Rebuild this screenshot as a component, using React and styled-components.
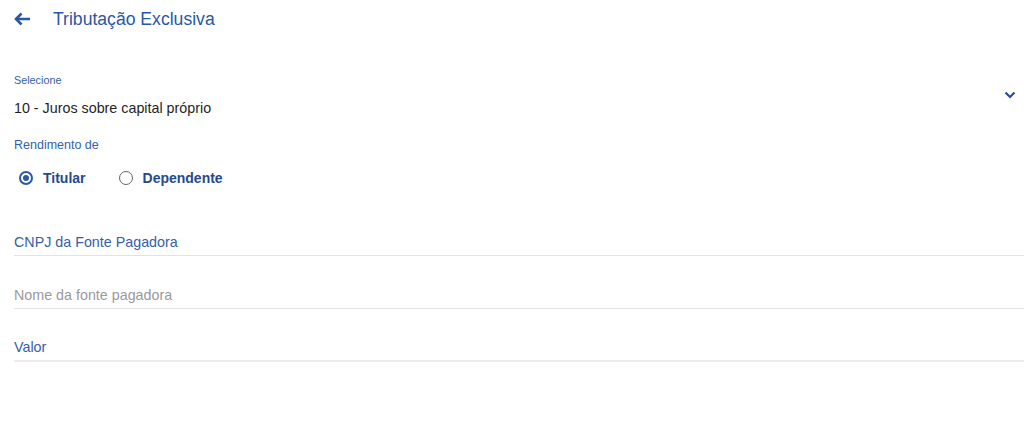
import React, { useState } from 'react';
import styled, { createGlobalStyle } from 'styled-components';

const GlobalStyle = createGlobalStyle`
    body {
        margin: 0;
        background: #ffffff;
        font-family: "Liberation Sans", Arial, sans-serif;
    }
`

const Page = styled.div`
    display: flex;
    flex-direction: column;
    padding-left: 14px;
`

const Header = styled.div`
    display: flex;
    align-items: center;
    height: 38px;
    gap: 22px;

    h1 {
        margin: 0;
        font-size: 17.6px;
        font-weight: 400;
        color: #2a58a6;
    }
`

const BackButton = styled.button`
    display: flex;
    align-items: center;
    border: none;
    background: none;
    padding: 0;
    cursor: pointer;
`

const SelectField = styled.div`
    display: flex;
    align-items: center;
    justify-content: space-between;
    margin-top: 35px;
    padding-right: 8px;
`

const SelectText = styled.div`
    display: flex;
    flex-direction: column;
`

const SmallLabel = styled.span`
    font-size: 10.8px;
    line-height: 14px;
    color: #3560a8;
`

const SelectValue = styled.span`
    margin-top: 13px;
    font-size: 14.3px;
    line-height: 16px;
    color: #1f1f1f;
`

const SectionLabel = styled.span`
    margin-top: 21px;
    font-size: 12.5px;
    line-height: 16px;
    color: #3560a8;
`

const RadioRow = styled.div`
    display: flex;
    align-items: center;
    gap: 33px;
    margin-top: 17px;
    padding-left: 5px;
`

const RadioOption = styled.label`
    display: flex;
    align-items: center;
    gap: 10px;
    font-size: 14px;
    font-weight: 700;
    color: #26498c;
    cursor: pointer;
`

const RadioCircle = styled.span`
    box-sizing: border-box;
    width: 14px;
    height: 14px;
    border-radius: 50%;
    border: ${props => props.checked ? '2px solid #2a58a6' : '1.5px solid #666666'};
    display: flex;
    align-items: center;
    justify-content: center;

    &::after {
        content: '';
        width: 6px;
        height: 6px;
        border-radius: 50%;
        background: ${props => props.checked ? '#2a58a6' : 'transparent'};
    }
`

const Fields = styled.div`
    display: flex;
    flex-direction: column;
    margin-top: 19px;
`

const InputField = styled.div`
    display: flex;
    align-items: flex-end;
    height: ${props => props.first ? '51px' : '53px'};
    box-sizing: border-box;
    padding-bottom: 5px;
    border-bottom: ${props => props.thick ? '2px solid #ececec' : '1px solid #e2e2e2'};

    span {
        font-size: 14.3px;
        line-height: 16px;
        color: ${props => props.muted ? '#9a9a9a' : '#3560a8'};
    }
`

function App() {
    const [owner, setOwner] = useState('titular')

    return (
        <Page>
            <GlobalStyle />
            <Header>
                <BackButton aria-label='Voltar'>
                    <svg width='17' height='14' viewBox='0 0 17 14'>
                        <path d='M16 7H2.5M7.5 1.5L2 7l5.5 5.5' fill='none' stroke='#2a58a6' strokeWidth='2.6' />
                    </svg>
                </BackButton>
                <h1>Tributação Exclusiva</h1>
            </Header>

            <SelectField>
                <SelectText>
                    <SmallLabel>Selecione</SmallLabel>
                    <SelectValue>10 - Juros sobre capital próprio</SelectValue>
                </SelectText>
                <svg width='12' height='8' viewBox='0 0 12 8'>
                    <path d='M1.5 1.5L6 6l4.5-4.5' fill='none' stroke='#2a4f96' strokeWidth='2.2' />
                </svg>
            </SelectField>

            <SectionLabel>Rendimento de</SectionLabel>
            <RadioRow>
                <RadioOption onClick={() => setOwner('titular')}>
                    <RadioCircle checked={owner === 'titular'} />
                    Titular
                </RadioOption>
                <RadioOption onClick={() => setOwner('dependente')}>
                    <RadioCircle checked={owner === 'dependente'} />
                    Dependente
                </RadioOption>
            </RadioRow>

            <Fields>
                <InputField first><span>CNPJ da Fonte Pagadora</span></InputField>
                <InputField muted><span>Nome da fonte pagadora</span></InputField>
                <InputField thick><span>Valor</span></InputField>
            </Fields>
        </Page>
    );
}

export default App;
